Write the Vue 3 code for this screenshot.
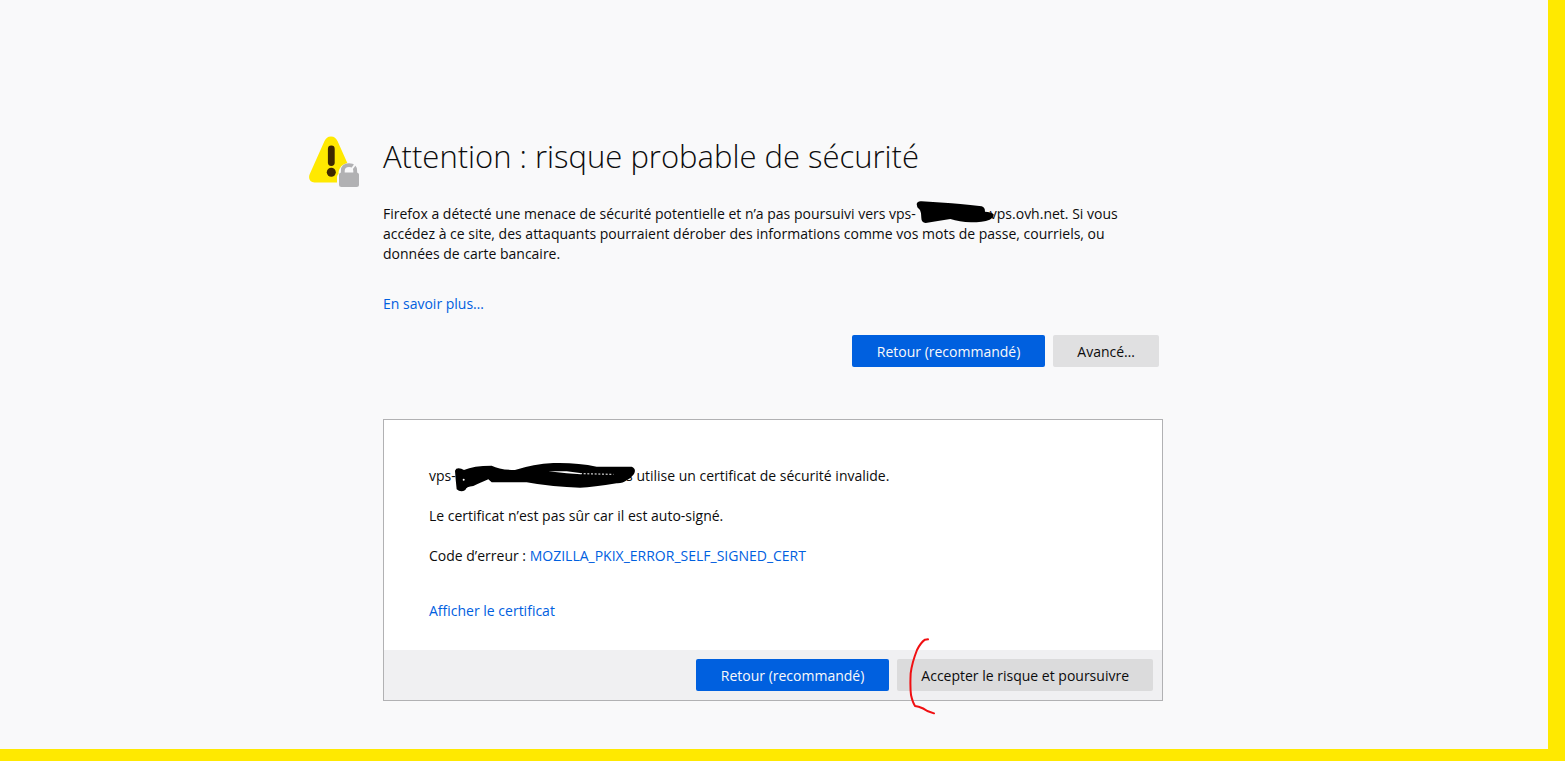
<script setup>
const learnMore = 'En savoir plus…'
const errorCode = 'MOZILLA_PKIX_ERROR_SELF_SIGNED_CERT'
</script>

<template>
  <main class="page">
    <div class="layout">
      <svg class="warning" viewBox="0 0 50 52" aria-hidden="true">
        <path d="M22 .5c-3.200 0-5.200 2-6.500 4.500L1 37.500C-1.300 42 1 46.500 5.500 46.500h33c4.500 0 6.700-4.500 4.500-9L28.500 5C27.200 2.500 25.200.5 22 .5Z" fill="#ffe900" />
        <path d="M22.300 13v13.500" stroke="#3e2800" stroke-width="6.800" stroke-linecap="round" />
        <circle cx="22.300" cy="36.300" r="4.500" fill="#3e2800" />
        <path d="M28 52V41.500c0-1.800.8-2.800 1.500-3.500 0-6 4-11 10.500-11s10.500 5 10.500 11V52Z" fill="#f9f9fa" />
        <path d="M33.800 39v-4c0-4 2.500-5.800 6.200-5.800s6.200 1.800 6.200 5.800v4" fill="none" stroke="#b1b1b3" stroke-width="3.800" />
        <path d="M40.500 36 46.500 28" stroke="#f9f9fa" stroke-width="2" />
        <rect x="30" y="36.500" width="20" height="14.500" rx="2.500" fill="#b1b1b3" />
      </svg>

      <div class="content">
        <h1>Attention : risque probable de sécurité</h1>
        <p class="intro">
          Firefox a détecté une menace de sécurité potentielle et n’a pas poursuivi vers vps-<span class="redacted short"><svg viewBox="175 30 240 72" aria-hidden="true">
            <path d="M177 42Q180 32 192 34L260 38Q300 40 372 49Q382 52 382 65Q400 65 408 73Q408 84 396 89Q375 97 340 97Q305 96 278 87Q240 93 204 99Q191 98 191 84L190 70Q188 58 179 52Z" />
          </svg></span>vps.ovh.net. Si vous accédez à ce site, des attaquants pourraient dérober des informations comme vos mots de passe, courriels, ou données de carte bancaire.
        </p>
        <p class="more"><a href="#">{{ learnMore }}</a></p>
        <div class="actions">
          <button type="button" class="primary">Retour (recommandé)</button>
          <button type="button">Avancé…</button>
        </div>

        <section class="panel">
          <div class="details">
            <p>vps-<span class="redacted long">s<svg viewBox="102 36 546 90" aria-hidden="true">
              <path d="M105 62Q108 52 124 56L132 60Q160 47 215 47Q240 60 285 60Q340 42 400 39Q470 37 530 50L635 50Q650 56 642 72Q632 86 620 91Q608 101 590 100Q520 112 480 113Q400 112 320 97L215 97L205 88Q190 94 160 108Q138 110 136 120Q122 128 110 118Q107 90 105 62Z" />
              <path class="gap" d="M385 64L440 64L480 69L482 73L440 70Z" />
              <path class="specks" d="M480 71L580 73" />
              <circle class="gap" cx="131" cy="89" r="3" />
            </svg></span> utilise un certificat de sécurité invalide.</p>
            <p>Le certificat n’est pas sûr car il est auto-signé.</p>
            <p>Code d’erreur : <a href="#">{{ errorCode }}</a></p>
            <p class="certificate"><a href="#">Afficher le certificat</a></p>
          </div>
          <footer>
            <button type="button" class="primary">Retour (recommandé)</button>
            <button type="button" class="accept">
              Accepter le risque et poursuivre
              <svg class="mark" viewBox="87 24 78 231" aria-hidden="true">
                <path d="M144 28L135 29Q122 38 111 60Q96 98 92 130Q90 170 93 195Q98 217 105 228L116 230Q130 234 142 243L162 250" />
              </svg>
            </button>
          </footer>
        </section>
      </div>
    </div>
  </main>
</template>

<style>
body {
  margin: 0;
}
</style>

<style scoped>
.page {
  box-sizing: border-box;
  min-height: 100vh;
  padding: 132px 0 48px;
  border-right: 17px solid #ffe900;
  border-bottom: 12px solid #ffe900;
  background: #f9f9fa;
  color: #0c0c0d;
  font: 14px/20px "Open Sans", "Noto Sans", sans-serif;
}
.layout {
  display: grid;
  grid-template-columns: 74px minmax(0, 780px) 76px;
  justify-content: center;
}
.warning {
  width: 50px;
  height: 52px;
  margin-top: 4px;
}
h1 {
  margin: 0 0 24px;
  font-size: 31px;
  line-height: 48px;
  font-weight: 300;
}
p {
  margin: 0;
}
.intro {
  max-width: 744px;
}
.more {
  margin-top: 30px;
}
a {
  color: #0060df;
  text-decoration: none;
}
.actions,
footer {
  display: flex;
  justify-content: flex-end;
  gap: 8px;
}
.actions {
  margin: 21px 4px 52px 0;
}
button {
  position: relative;
  height: 32px;
  padding: 2px 24px 0;
  border: 0;
  border-radius: 2px;
  background: #e0e0e1;
  color: #0c0c0d;
  font: inherit;
  white-space: nowrap;
}
.primary {
  padding: 2px 25px 0;
  background: #0060df;
  color: #f9f9fa;
}
.accept {
  background: #dbdbdc;
}
.panel {
  border: 1px solid #b1b1b3;
  background: #fff;
}
.details {
  display: grid;
  gap: 20px;
  padding: 46px 45px 29px;
}
.certificate {
  margin-top: 15px;
}
footer {
  padding: 9px;
  background: #f0f0f2;
}
.redacted {
  position: relative;
  display: inline-block;
  text-align: right;
}
.redacted svg {
  position: absolute;
}
.short {
  width: 74px;
}
.short svg {
  top: -19px;
  left: 0;
  width: 80px;
  height: 24px;
}
.long {
  width: 177px;
}
.long svg {
  top: -4px;
  left: -2px;
  width: 182px;
  height: 30px;
}
.gap {
  fill: #fff;
}
.specks {
  stroke: #fff;
  stroke-width: 3;
  stroke-dasharray: 6 5;
}
.mark {
  position: absolute;
  top: -21px;
  left: 12px;
  width: 26px;
  height: 77px;
  fill: none;
  stroke: #f00f12;
  stroke-width: 6;
  stroke-linecap: round;
  stroke-linejoin: round;
}
</style>
